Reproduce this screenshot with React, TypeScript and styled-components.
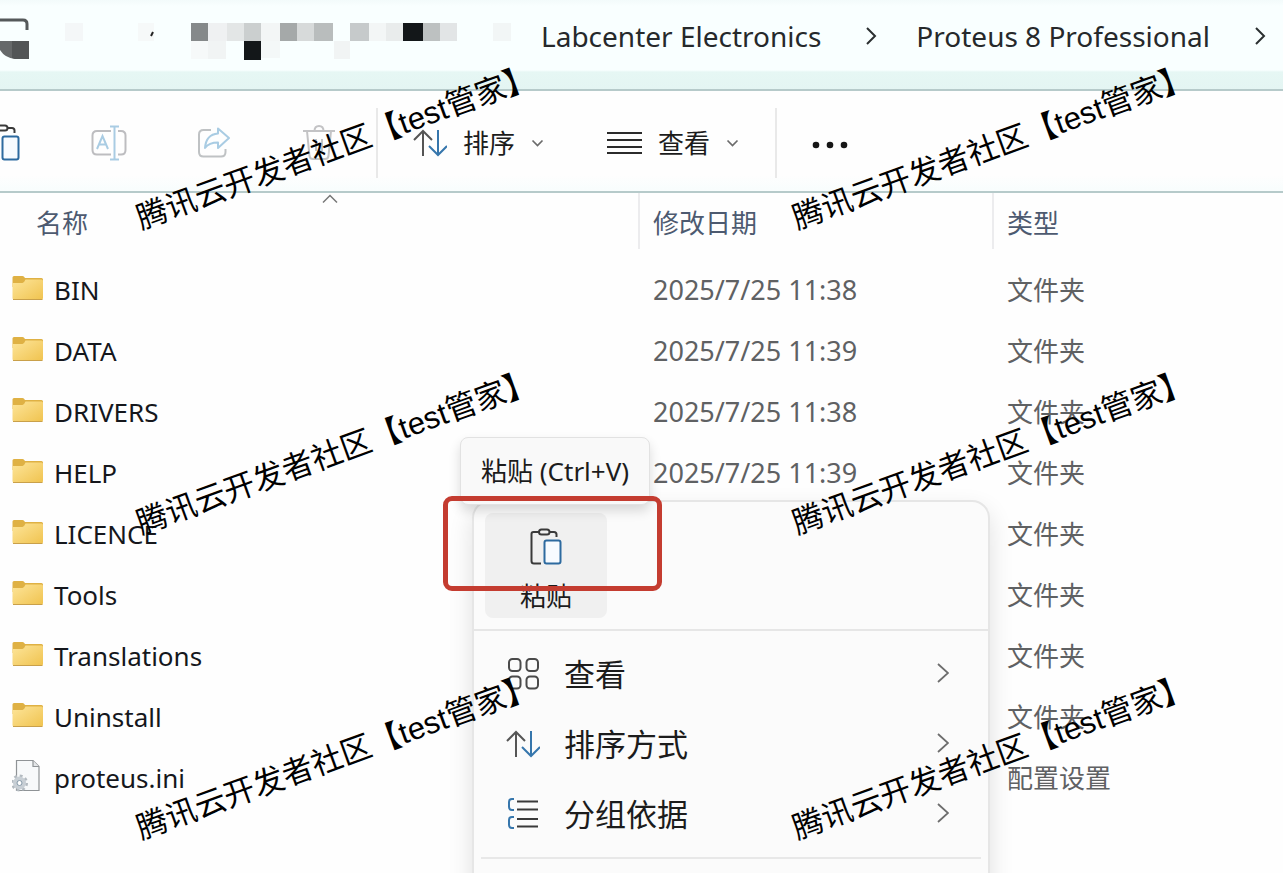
import React from "react";
import styled, { createGlobalStyle } from "styled-components";

const GlobalStyle = createGlobalStyle`
  * { box-sizing: border-box; }
  body {
    margin: 0;
    background: #fefefe;
    font-family: "Noto Sans", "Noto Sans CJK SC", sans-serif;
    color: #1c1c1c;
  }
  button {
    font: inherit;
    color: inherit;
    border: 0;
    padding: 0;
    background: none;
  }
`;

const Explorer = styled.div`
  position: relative;
  height: 100vh;
  overflow: hidden;
`;

/* Address bar */
const AddressBar = styled.nav`
  display: flex;
  align-items: center;
  height: 91px;
  padding-bottom: 18px;
  overflow: hidden;
  border-bottom: 2px solid #b6caca;
  background: linear-gradient(#f3fbfb 0, #f9ffff 6px, #f9ffff 70px, #e6f7f4 72px, #e4f5f3 100%);
`;

const Crumb = styled.a`
  flex: none;
  font-size: 28px;
  line-height: 36px;
  color: #26292b;
  text-decoration: none;
  white-space: nowrap;
`;

const CrumbArrow = styled.svg`
  flex: none;
  margin: 0 39px 0 45px;
`;

const Mosaic = styled.svg`
  flex: none;
  display: block;
`;

/* Command bar */
const CommandBar = styled.div`
  display: flex;
  align-items: center;
  height: 102px;
  padding-top: 4px;
  margin-left: -49px;
  border-bottom: 2px solid #b6caca;
  background: linear-gradient(#fefefe 84px, #f8fdfd 100%);
`;

const IconCommand = styled.button`
  display: flex;
  flex: none;
  justify-content: center;
  width: 105px;
`;

const Separator = styled.div`
  flex: none;
  width: 2px;
  height: 70px;
  margin: 0 35px 0 5px;
  background: #e9e9e9;
`;

const DropCommand = styled.button`
  display: flex;
  flex: none;
  align-items: center;
  gap: 16px;
  margin-right: ${(p: { $after: number }) => p.$after}px;
  font-size: 26px;
  line-height: 36px;
`;

/* File list */
const FileTable = styled.table`
  width: 100%;
  table-layout: fixed;
  border-collapse: separate;
  border-spacing: 0;
`;

const HeadCell = styled.th<{ $width?: number; $indent: number }>`
  position: relative;
  width: ${(p) => (p.$width ? `${p.$width}px` : "auto")};
  height: 56px;
  padding: 4px 0 0 ${(p) => p.$indent}px;
  border-right: ${(p) => (p.$width ? "2px solid #ececee" : "0")};
  font-size: 26px;
  line-height: 36px;
  font-weight: 400;
  text-align: left;
  color: #4d5a70;
`;

const SortCaret = styled.svg`
  position: absolute;
  top: 0;
  left: 22px;
  right: 0;
  margin: 0 auto;
`;

const Spacer = styled.tr`
  height: 10px;
`;

const Cell = styled.td`
  height: 61px;
  padding: 0 0 0 13px;
  font-size: 26px;
  line-height: 36px;
  color: #5f6163;
  white-space: nowrap;
`;

const DateCell = styled(Cell)`
  font-size: 27px;
`;

const FileName = styled.div`
  display: flex;
  align-items: center;
  gap: 10px;
  margin-left: -1px;
  color: #15171c;

  svg {
    flex: none;
    margin-bottom: 4px;
  }
`;

/* Context menu */
const ContextMenu = styled.div`
  position: absolute;
  top: 500px;
  left: 472px;
  width: 518px;
  height: 420px;
  border: 2px solid #e6e6e6;
  border-radius: 18px;
  background: #fbfbfb;
  box-shadow: 0 10px 24px rgba(0, 0, 0, 0.12);
`;

const QuickActions = styled.div`
  display: flex;
  padding: 11px;
  border-bottom: 2px solid #e6e6e6;
`;

const PasteButton = styled.button`
  display: flex;
  flex-direction: column;
  align-items: center;
  gap: 12px;
  width: 122px;
  height: 105px;
  padding-top: 15px;
  border-radius: 8px;
  background: #f0f0f0;
  font-size: 26px;
  line-height: 36px;
`;

const MenuList = styled.div`
  display: flex;
  flex-direction: column;
  margin: 0 7px;
  padding: 8px 0;
  border-bottom: 2px solid #e8e8e8;
`;

const MenuItem = styled.button`
  display: flex;
  align-items: center;
  gap: 24px;
  height: 70px;
  padding: 0 32px 0 25px;
  font-size: 31px;
  line-height: 40px;
  text-align: left;

  span {
    flex: 1;
  }
`;

const Tooltip = styled.div`
  position: absolute;
  top: 437px;
  left: 460px;
  padding: 15px 20px;
  border: 1px solid #e2e2e2;
  border-radius: 8px;
  background: #f9f9f9;
  box-shadow: 0 6px 12px rgba(0, 0, 0, 0.14);
  font-size: 26px;
  line-height: 36px;
  white-space: nowrap;
`;

const RedFrame = styled.div`
  position: absolute;
  top: 496px;
  left: 443px;
  width: 219px;
  height: 95px;
  border: 5px solid #c43c30;
  border-radius: 9px;
`;

/* Watermark */
const WatermarkLayer = styled.div`
  position: absolute;
  inset: 0;
  display: grid;
  grid-template-columns: repeat(2, 656px);
  grid-auto-rows: 305px;
  pointer-events: none;
`;

const WatermarkText = styled.div`
  display: flex;
  align-items: center;
  justify-content: center;
  padding: 0 0 10px 16px;
  font-family: "Liberation Sans", "Noto Sans CJK SC", sans-serif;
  font-size: 31px;
  line-height: 40px;
  color: #000;
  white-space: nowrap;

  span {
    transform: rotate(-20deg);
  }
`;

const mosaicCells: [number, number, number, number, string][] = [
  [65, 23, 18, 18, "#f4f7f8"],
  [138, 23, 16, 18, "#f6f9f9"],
  [191, 23, 17, 18, "#85898a"],
  [208, 23, 19, 18, "#eff1f2"],
  [227, 23, 17, 18, "#e3e6e6"],
  [244, 23, 17, 18, "#cbcfcf"],
  [261, 23, 19, 18, "#f3f6f6"],
  [280, 23, 17, 18, "#a5a9a9"],
  [297, 23, 17, 18, "#d7dada"],
  [314, 23, 19, 18, "#b9bdbd"],
  [350, 23, 19, 18, "#c6cacb"],
  [369, 23, 17, 18, "#f3f6f6"],
  [386, 23, 17, 18, "#e9ecec"],
  [403, 23, 20, 18, "#131719"],
  [423, 23, 17, 18, "#bdc1c1"],
  [440, 23, 17, 18, "#e2e5e6"],
  [493, 23, 18, 18, "#f2f6f6"],
  [191, 41, 17, 18, "#f6f9f9"],
  [208, 41, 18, 18, "#f1f4f4"],
  [244, 41, 17, 19, "#131719"],
  [261, 41, 19, 17, "#f4f8f8"],
  [334, 41, 16, 18, "#f1f4f4"],
];

const MosaicStrip = () => (
  <Mosaic width="541" height="72" viewBox="0 0 541 72" aria-hidden="true">
    <path d="M0 20H23Q27 20 27 24V30" fill="none" stroke="#55595a" strokeWidth="3" />
    <path d="M0 41H29V59H15Q5 58 0 50Z" fill="#66696a" />
    <path d="M12 41H29V59H15L12 58Z" fill="#525556" />
    {mosaicCells.map(([x, y, w, h, fill]) => (
      <rect key={`${x}-${y}`} x={x} y={y} width={w} height={h} fill={fill} />
    ))}
    <path d="M153 32l-2 4" stroke="#222" strokeWidth="2" />
  </Mosaic>
);

const ArrowRight = () => (
  <CrumbArrow width="11" height="20" viewBox="0 0 11 20" aria-hidden="true">
    <path d="M1 2l8 8-8 8" fill="none" stroke="#2b2f30" strokeWidth="2" />
  </CrumbArrow>
);

const ChevronDown = () => (
  <svg width="14" height="10" viewBox="0 0 14 10" aria-hidden="true">
    <path d="M1.500 2.500l5 5 5-5" fill="none" stroke="#6b6b6b" strokeWidth="1.7" />
  </svg>
);

const ClipboardIcon = () => (
  <svg width="32" height="38" viewBox="0 0 32 38" fill="none" strokeWidth="2" aria-hidden="true">
    <path d="M9 4H3.500Q1.500 4 1.500 6V33Q1.500 35.500 4 35.500H11" stroke="#3a3a3a" />
    <path d="M19 4H24Q26.500 4 26.500 6.500V9" stroke="#3a3a3a" />
    <rect x="9" y="1.500" width="10.500" height="5" rx="2.500" stroke="#3a3a3a" />
    <rect x="14.500" y="12.500" width="16" height="23" rx="2" fill="#f7fbff" stroke="#2d6a9f" />
  </svg>
);

const RenameIcon = () => (
  <svg width="36" height="36" viewBox="0 0 36 36" fill="none" strokeWidth="2" aria-hidden="true">
    <path d="M20 6H6Q1.500 6 1.500 10.500V25Q1.500 29.500 6 29.500H20M27 6H30Q34.500 6 34.500 10.500V25Q34.500 29.500 30 29.500H27" stroke="#bdbdc0" />
    <path d="M23.500 2V34M19 1.500H28M19 34.500H28" stroke="#a9cce3" />
    <path d="M6 24L11.500 11L17 24M8 19.500H15" stroke="#a9cce3" />
  </svg>
);

const ShareIcon = () => (
  <svg width="34" height="34" viewBox="0 0 34 34" fill="none" strokeWidth="2" aria-hidden="true">
    <path d="M14 4H6.500Q2 4 2 8.500V26Q2 30.500 6.500 30.500H24Q28.500 30.500 28.500 26V23" stroke="#bfc2c4" />
    <path d="M21 2.500L32 12L21 22V16.500Q12 16.500 8 22Q9 8.500 21 7.500Z" stroke="#a9cce3" strokeLinejoin="round" />
  </svg>
);

const TrashIcon = () => (
  <svg width="32" height="38" viewBox="0 0 32 38" fill="none" stroke="#c3c3c5" strokeWidth="2" aria-hidden="true">
    <path d="M0 7H32M11.500 7Q11.500 2 16 2Q20.500 2 20.500 7M4 7L6.500 32Q7 35 10 35H22Q25 35 25.500 32L28 7M13 15V27M19 15V27" />
  </svg>
);

const SortIcon = () => (
  <svg width="34" height="28" viewBox="0 0 34 28" fill="none" strokeWidth="2" aria-hidden="true">
    <path d="M10 27V2M1 11L10 2L19 11" stroke="#555" />
    <path d="M25 1V26M16 17L25 26L34 17" stroke="#3676ac" />
  </svg>
);

const LinesIcon = () => (
  <svg width="35" height="24" viewBox="0 0 35 24" aria-hidden="true">
    <path d="M0 2H35M0 9H35M0 16H35M0 22H35" stroke="#2b2b2b" strokeWidth="2" />
  </svg>
);

const DotsIcon = () => (
  <svg width="36" height="8" viewBox="0 0 36 8" fill="#161616" aria-hidden="true">
    <circle cx="4" cy="4" r="3.300" />
    <circle cx="18" cy="4" r="3.300" />
    <circle cx="32" cy="4" r="3.300" />
  </svg>
);

const GridIcon = () => (
  <svg width="34" height="34" viewBox="0 0 34 34" fill="none" stroke="#4a4a4a" strokeWidth="2" aria-hidden="true">
    <rect x="3" y="2" width="11.500" height="12" rx="3.500" />
    <rect x="20.500" y="2" width="11.500" height="12" rx="3.500" />
    <rect x="3" y="19.500" width="11.500" height="12" rx="3.500" />
    <rect x="20.500" y="19.500" width="11.500" height="12" rx="3.500" />
  </svg>
);

const GroupIcon = () => (
  <svg width="34" height="34" viewBox="0 0 34 34" fill="none" strokeWidth="2" aria-hidden="true">
    <path d="M8 2H6Q3 2 3 5V10Q3 13 6 13H8M8 20H6Q3 20 3 23V28Q3 31 6 31H8" stroke="#3676ac" />
    <path d="M11 4.500H32M11 12.500H32M11 22H32M11 29.500H32" stroke="#3a3a3a" />
  </svg>
);

const MenuArrow = () => (
  <svg width="12" height="22" viewBox="0 0 12 22" aria-hidden="true">
    <path d="M1 1l10 9-10 9" fill="none" stroke="#6d6d6d" strokeWidth="1.800" />
  </svg>
);

const FolderIcon = () => (
  <svg width="32" height="26" viewBox="0 0 32 26" aria-hidden="true">
    <defs>
      <linearGradient id="folderFront" x1="0" y1="0" x2="1" y2="1">
        <stop offset="0" stopColor="#fde59a" />
        <stop offset="1" stopColor="#f0c34f" />
      </linearGradient>
    </defs>
    <path d="M0.500 2.500Q0.500 1 2 1H10.500Q12 1 13 3H29.500Q31 3 31 4.500V12H0.500Z" fill="#dfb144" />
    <path d="M0.500 8H10.500Q12 8 13.500 4.500H29.500Q31 4.500 31 6V23Q31 24.500 29.500 24.500H2Q0.500 24.500 0.500 23Z" fill="url(#folderFront)" />
    <path d="M1 24.500H30.500" stroke="#c9a04a" strokeWidth="1" />
  </svg>
);

const IniIcon = () => (
  <svg width="32" height="34" viewBox="0 0 32 34" aria-hidden="true">
    <path d="M4.500 1.500H21L27 7.500V31.500H4.500Z" fill="#f7f9fa" stroke="#8f9396" strokeWidth="1.200" />
    <path d="M21 1.500V7.500H27" fill="#e3e6e8" stroke="#8f9396" strokeWidth="1.200" />
    <circle cx="7.500" cy="24" r="7" fill="none" stroke="#b3bac0" strokeWidth="3" strokeDasharray="2.750 2.750" />
    <circle cx="7.500" cy="24" r="4.500" fill="#fff" stroke="#c8cfd5" strokeWidth="4" />
    <circle cx="7.500" cy="24" r="2.500" fill="#fff" stroke="#8599a8" strokeWidth="1" />
  </svg>
);

const files = [
  { name: "BIN", date: "2025/7/25 11:38", type: "文件夹" },
  { name: "DATA", date: "2025/7/25 11:39", type: "文件夹" },
  { name: "DRIVERS", date: "2025/7/25 11:38", type: "文件夹" },
  { name: "HELP", date: "2025/7/25 11:39", type: "文件夹" },
  { name: "LICENCE", date: "", type: "文件夹" },
  { name: "Tools", date: "", type: "文件夹" },
  { name: "Translations", date: "", type: "文件夹" },
  { name: "Uninstall", date: "", type: "文件夹" },
  { name: "proteus.ini", date: "", type: "配置设置" },
];

const menuItems = [
  { label: "查看", Icon: GridIcon },
  { label: "排序方式", Icon: SortIcon },
  { label: "分组依据", Icon: GroupIcon },
];

export default function App() {
  return (
    <Explorer>
      <GlobalStyle />
      <AddressBar aria-label="路径">
        <MosaicStrip />
        <Crumb href="#labcenter">Labcenter Electronics</Crumb>
        <ArrowRight />
        <Crumb href="#proteus">Proteus 8 Professional</Crumb>
        <ArrowRight />
      </AddressBar>

      <CommandBar role="toolbar">
        <IconCommand aria-label="粘贴"><ClipboardIcon /></IconCommand>
        <IconCommand aria-label="重命名"><RenameIcon /></IconCommand>
        <IconCommand aria-label="共享"><ShareIcon /></IconCommand>
        <IconCommand aria-label="删除"><TrashIcon /></IconCommand>
        <Separator />
        <DropCommand $after={62}><SortIcon />排序<ChevronDown /></DropCommand>
        <DropCommand $after={30}><LinesIcon />查看<ChevronDown /></DropCommand>
        <Separator />
        <button aria-label="更多"><DotsIcon /></button>
      </CommandBar>

      <FileTable>
        <thead>
          <tr>
            <HeadCell $width={640} $indent={36}>
              名称
              <SortCaret width="16" height="12" viewBox="0 0 16 12" aria-hidden="true">
                <path d="M1 9.500L8 2.500L15 9.500" fill="none" stroke="#777" strokeWidth="1.500" />
              </SortCaret>
            </HeadCell>
            <HeadCell $width={354} $indent={13}>修改日期</HeadCell>
            <HeadCell $indent={13}>类型</HeadCell>
          </tr>
        </thead>
        <tbody>
          <Spacer aria-hidden="true" />
          {files.map((file) => (
            <tr key={file.name}>
              <Cell>
                <FileName>
                  {file.name.endsWith(".ini") ? <IniIcon /> : <FolderIcon />}
                  {file.name}
                </FileName>
              </Cell>
              <DateCell>{file.date}</DateCell>
              <Cell>{file.type}</Cell>
            </tr>
          ))}
        </tbody>
      </FileTable>

      <ContextMenu role="menu">
        <QuickActions>
          <PasteButton><ClipboardIcon />粘贴</PasteButton>
        </QuickActions>
        <MenuList>
          {menuItems.map(({ label, Icon }) => (
            <MenuItem key={label} role="menuitem">
              <Icon />
              <span>{label}</span>
              <MenuArrow />
            </MenuItem>
          ))}
        </MenuList>
      </ContextMenu>
      <Tooltip role="tooltip">粘贴 (Ctrl+V)</Tooltip>
      <RedFrame />

      <WatermarkLayer aria-hidden="true">
        {Array.from({ length: 6 }, (_, i) => (
          <WatermarkText key={i}><span>腾讯云开发者社区【test管家】</span></WatermarkText>
        ))}
      </WatermarkLayer>
    </Explorer>
  );
}
